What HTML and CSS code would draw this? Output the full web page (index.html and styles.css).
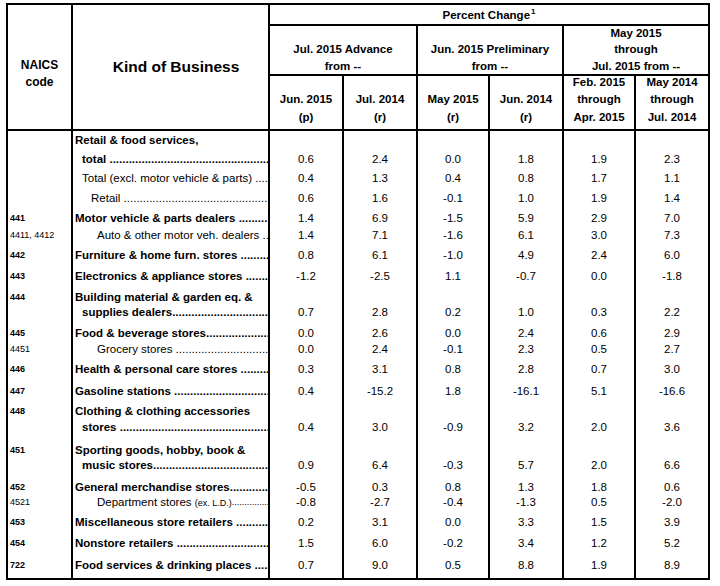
FILE: index.html
```html
<!DOCTYPE html>
<html>
<head>
<meta charset="utf-8">
<link rel="stylesheet" href="styles.css">
</head>
<body>
<div class="table">
  <div class="head">
    <div class="naics-h">NAICS<br>code</div>
    <div class="kind-h">Kind of Business</div>
    <div class="pct"><span>Percent Change<sup>1</sup></span></div>
    <div class="grp g1">Jul. 2015 Advance<br>from --</div>
    <div class="grp g2">Jun. 2015 Preliminary<br>from --</div>
    <div class="grp g3">May 2015<br>through<br>Jul. 2015 from --</div>
    <div class="sub">Jun. 2015<br>(p)</div>
    <div class="sub">Jul. 2014<br>(r)</div>
    <div class="sub">May 2015<br>(r)</div>
    <div class="sub">Jun. 2014<br>(r)</div>
    <div class="sub">Feb. 2015<br>through<br>Apr. 2015</div>
    <div class="sub">May 2014<br>through<br>Jul. 2014</div>
  </div>
  <div class="body">
    <div class="row h19"><div class="c"></div><div class="k b i0"><span>Retail &amp; food services,</span></div><div></div><div></div><div></div><div></div><div></div><div></div></div>
    <div class="row h19"><div class="c"></div><div class="k b i1"><span>total&nbsp;</span><span class="dots"></span></div><div>0.6</div><div>2.4</div><div>0.0</div><div>1.8</div><div>1.9</div><div>2.3</div></div>
    <div class="row h20"><div class="c"></div><div class="k i1"><span>Total (excl. motor vehicle &amp; parts)&nbsp;</span><span class="dots"></span></div><div>0.4</div><div>1.3</div><div>0.4</div><div>0.8</div><div>1.7</div><div>1.1</div></div>
    <div class="row h20"><div class="c"></div><div class="k i2"><span>Retail&nbsp;</span><span class="dots"></span></div><div>0.6</div><div>1.6</div><div>-0.1</div><div>1.0</div><div>1.9</div><div>1.4</div></div>
    <div class="row h17"><div class="c cb">441</div><div class="k b i0"><span>Motor vehicle &amp; parts dealers&nbsp;</span><span class="dots"></span></div><div>1.4</div><div>6.9</div><div>-1.5</div><div>5.9</div><div>2.9</div><div>7.0</div></div>
    <div class="row h20"><div class="c">4411, 4412</div><div class="k i3"><span>Auto &amp; other motor veh. dealers&nbsp;</span><span class="dots"></span></div><div>1.4</div><div>7.1</div><div>-1.6</div><div>6.1</div><div>3.0</div><div>7.3</div></div>
    <div class="row h21"><div class="c cb">442</div><div class="k b i0"><span>Furniture &amp; home furn. stores&nbsp;</span><span class="dots"></span></div><div>0.8</div><div>6.1</div><div>-1.0</div><div>4.9</div><div>2.4</div><div>6.0</div></div>
    <div class="row h21"><div class="c cb">443</div><div class="k b i0"><span>Electronics &amp; appliance stores&nbsp;</span><span class="dots"></span></div><div>-1.2</div><div>-2.5</div><div>1.1</div><div>-0.7</div><div>0.0</div><div>-1.8</div></div>
    <div class="row h15"><div class="c cb">444</div><div class="k b i0"><span>Building material &amp; garden eq. &amp;</span></div><div></div><div></div><div></div><div></div><div></div><div></div></div>
    <div class="row h21"><div class="c"></div><div class="k b i1"><span>supplies dealers</span><span class="dots"></span></div><div>0.7</div><div>2.8</div><div>0.2</div><div>1.0</div><div>0.3</div><div>2.2</div></div>
    <div class="row h16"><div class="c cb">445</div><div class="k b i0"><span>Food &amp; beverage stores</span><span class="dots"></span></div><div>0.0</div><div>2.6</div><div>0.0</div><div>2.4</div><div>0.6</div><div>2.9</div></div>
    <div class="row h20"><div class="c">4451</div><div class="k i3"><span>Grocery stores&nbsp;</span><span class="dots"></span></div><div>0.0</div><div>2.4</div><div>-0.1</div><div>2.3</div><div>0.5</div><div>2.7</div></div>
    <div class="row h22"><div class="c cb">446</div><div class="k b i0"><span>Health &amp; personal care stores&nbsp;</span><span class="dots"></span></div><div>0.3</div><div>3.1</div><div>0.8</div><div>2.8</div><div>0.7</div><div>3.0</div></div>
    <div class="row h20"><div class="c cb">447</div><div class="k b i0"><span>Gasoline stations&nbsp;</span><span class="dots"></span></div><div>0.4</div><div>-15.2</div><div>1.8</div><div>-16.1</div><div>5.1</div><div>-16.6</div></div>
    <div class="row h16"><div class="c cb">448</div><div class="k b i0"><span>Clothing &amp; clothing accessories</span></div><div></div><div></div><div></div><div></div><div></div><div></div></div>
    <div class="row h23"><div class="c"></div><div class="k b i1"><span>stores&nbsp;</span><span class="dots"></span></div><div>0.4</div><div>3.0</div><div>-0.9</div><div>3.2</div><div>2.0</div><div>3.6</div></div>
    <div class="row h15"><div class="c cb">451</div><div class="k b i0"><span>Sporting goods, hobby, book &amp;</span></div><div></div><div></div><div></div><div></div><div></div><div></div></div>
    <div class="row h22"><div class="c"></div><div class="k b i1"><span>music stores</span><span class="dots"></span></div><div>0.9</div><div>6.4</div><div>-0.3</div><div>5.7</div><div>2.0</div><div>6.6</div></div>
    <div class="row h15"><div class="c cb">452</div><div class="k b i0"><span>General merchandise stores</span><span class="dots"></span></div><div>-0.5</div><div>0.3</div><div>0.8</div><div>1.3</div><div>1.8</div><div>0.6</div></div>
    <div class="row h20"><div class="c">4521</div><div class="k i3"><span>Department stores <span class="sm">(ex. L.D.)</span></span><span class="dots sm"></span></div><div>-0.8</div><div>-2.7</div><div>-0.4</div><div>-1.3</div><div>0.5</div><div>-2.0</div></div>
    <div class="row h21"><div class="c cb">453</div><div class="k b i0"><span>Miscellaneous store retailers&nbsp;</span><span class="dots"></span></div><div>0.2</div><div>3.1</div><div>0.0</div><div>3.3</div><div>1.5</div><div>3.9</div></div>
    <div class="row h22"><div class="c cb">454</div><div class="k b i0"><span>Nonstore retailers&nbsp;</span><span class="dots"></span></div><div>1.5</div><div>6.0</div><div>-0.2</div><div>3.4</div><div>1.2</div><div>5.2</div></div>
    <div class="row h22"><div class="c cb">722</div><div class="k b i0"><span>Food services &amp; drinking places&nbsp;</span><span class="dots"></span></div><div>0.7</div><div>9.0</div><div>0.5</div><div>8.8</div><div>1.9</div><div>8.9</div></div>
  </div>
</div>
</body>
</html>
```
FILE: styles.css
```css
html, body {
  margin: 0;
  padding: 0;
  background: #fff;
}
body {
  font-family: "Liberation Sans", Arial, sans-serif;
  color: #000;
  font-size: 11.5px;
}
.table {
  display: flex;
  flex-direction: column;
  gap: 2px;
  width: max-content;
  margin: 3px 0 0 6px;
  border: 2px solid #000;
  background: #000;
}
.head {
  display: grid;
  grid-template-columns: 63px 195px 72px 72px 70px 72px 70px 72px;
  grid-template-rows: 19px 48px 53px;
  gap: 2px;
  background: #000;
}
.head > div {
  background: #fff;
  font-weight: bold;
  font-size: 11.5px;
  text-align: center;
  display: flex;
  flex-direction: column;
  justify-content: flex-end;
  align-items: center;
}
.naics-h {
  grid-column: 1;
  grid-row: 1 / 4;
  font-size: 12px !important;
  line-height: 17px;
  justify-content: center !important;
  padding-top: 13px;
}
.kind-h {
  grid-column: 2;
  grid-row: 1 / 4;
  font-size: 15.5px !important;
  justify-content: center !important;
  padding-left: 11px;
  padding-bottom: 1px;
}
.pct {
  grid-column: 3 / 9;
  grid-row: 1;
  justify-content: center !important;
  line-height: 16px;
}
.pct sup {
  font-size: 8px;
  vertical-align: 5px;
  line-height: 0;
  margin-left: 1px;
}
.grp {
  grid-row: 2;
  line-height: 16.5px;
}
.g1 { grid-column: 3 / 5; }
.g2 { grid-column: 5 / 7; }
.g3 { grid-column: 7 / 9; }
.sub {
  grid-row: 3;
  line-height: 17.5px;
  padding-bottom: 3px;
}
.body {
  display: flex;
  flex-direction: column;
}
.row {
  display: grid;
  grid-template-columns: 63px 195px 72px 72px 70px 72px 70px 72px;
  column-gap: 2px;
  background: #000;
}
.row > div {
  background: #fff;
  line-height: 16px;
  padding-top: 1px;
  text-align: center;
  font-size: 11.5px;
}
.h15 { height: 15px; }
.h16 { height: 16px; }
.h17 { height: 17px; }
.h19 { height: 19px; }
.h20 { height: 20px; }
.h21 { height: 21px; }
.h22 { height: 22px; }
.h23 { height: 23px; }
.row > .c {
  text-align: left;
  font-size: 9px;
  padding-left: 2px;
  white-space: nowrap;
}
.row > .cb { font-weight: bold; }
.row > .k {
  display: flex;
  text-align: left;
  white-space: nowrap;
  overflow: hidden;
}
.b { font-weight: bold; }
.i0 { padding-left: 2px; }
.i1 { padding-left: 9px; }
.i2 { padding-left: 18px; }
.i3 { padding-left: 24px; }
.dots {
  flex: 1;
  overflow: hidden;
  min-width: 0;
}
.dots::before {
  content: "....................................................................................................................";
}
.sm { font-size: 9px; }
```
